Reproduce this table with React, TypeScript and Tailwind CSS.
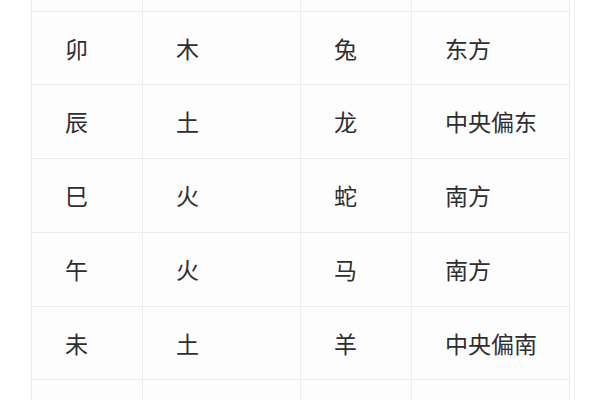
import React from "react";

const rows: { h: string; c: [string, string, string, string] }[] = [
  { h: "h-[74px]", c: ["", "", "", ""] },
  { h: "h-[73px]", c: ["卯", "木", "兔", "东方"] },
  { h: "h-[74px]", c: ["辰", "土", "龙", "中央偏东"] },
  { h: "h-[74px]", c: ["巳", "火", "蛇", "南方"] },
  { h: "h-[74px]", c: ["午", "火", "马", "南方"] },
  { h: "h-[73px]", c: ["未", "土", "羊", "中央偏南"] },
  { h: "h-[74px]", c: ["", "", "", ""] },
];

const widths = ["w-[111px]", "w-[158px]", "w-[111px]", "w-[158px]"];

export default function App() {
  return (
    <div
      className="w-[600px] h-[400px] overflow-hidden bg-white flex items-start"
      style={{ fontFamily: '"Noto Sans CJK SC", "Noto Sans", sans-serif' }}
    >
      <div className="ml-[31px] mt-[-62px] flex flex-col shrink-0 border-l border-[#ececec]">
        {rows.map((r, i) => (
          <div key={i} className={`flex shrink-0 border-b border-[#ececec] ${r.h}`}>
            {r.c.map((t, j) => (
              <div
                key={j}
                className={`${widths[j]} shrink-0 border-r border-[#ececec] flex items-center pl-[33px] text-[23px] text-[#2e2e2e] bg-[#fdfdfd]`}
              >
                {t}
              </div>
            ))}
          </div>
        ))}
      </div>
      <div className="ml-[4px] w-px h-[400px] bg-[#f0f0f0]" />
    </div>
  );
}
